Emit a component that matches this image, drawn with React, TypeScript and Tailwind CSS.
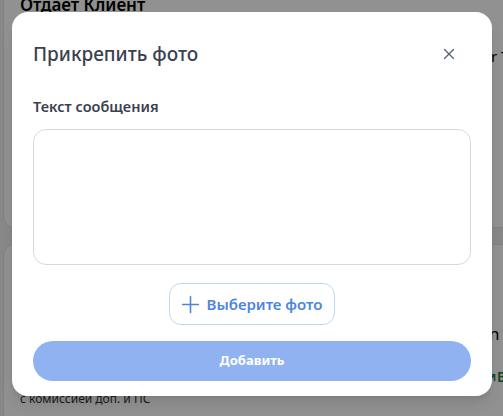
import { X, Plus } from "lucide-react";

export default function App() {
  return (
    <div
      className="relative h-[416px] w-[503px] overflow-hidden bg-[#f0f0f0]"
      style={{ fontFamily: "'Noto Sans', Inter, sans-serif" }}
    >
      {/* page behind the modal */}
      <div className="-mt-[20px] flex w-[540px] flex-col gap-[16px] pl-[3px]">
        <div className="h-[248px] rounded-xl border border-[#e4e4e4] bg-white pl-4 pt-[14px]">
          <div className="text-[17px] font-semibold leading-[20px] text-black">Отдает Клиент</div>
          <div className="mt-[30px] pl-[471px] text-[15px] text-black">r T</div>
        </div>
        <div className="h-[200px] rounded-xl border border-[#e4e4e4] bg-white pl-4">
          <div className="mt-[78px] pl-[469px] text-[17px] leading-[22px] text-black">n</div>
          <div className="mt-[22px] pl-[466px] text-[14px] font-semibold leading-[20px] text-[#1d7a4a]">↗В</div>
          <div className="mt-[4px] text-[12px] leading-[16px] text-[#333]">с комиссией доп. и ПС</div>
        </div>
      </div>

      {/* overlay */}
      <div className="absolute inset-0 bg-black/[0.43]" />

      {/* modal */}
      <div className="absolute left-[12px] top-[12px] flex h-[384px] w-[480px] flex-col rounded-[16px] bg-white px-[21px] shadow-lg">
        <div className="flex items-center justify-between pt-[28px]">
          <h2 className="text-[19px] font-medium leading-[28px] text-[#3a4150]">Прикрепить фото</h2>
          <button className="mr-[13px] text-[#5b6475]">
            <X size={18} strokeWidth={1.8} />
          </button>
        </div>
        <label className="mt-[28px] text-[14.5px] font-semibold leading-[20px] text-[#3a4150]">Текст сообщения</label>
        <textarea className="mt-[13px] h-[136px] w-full resize-none rounded-[13px] border border-[#d4d9e0] outline-none" />
        <div className="mt-[18px] flex justify-center">
          <button className="flex h-[42px] items-center gap-[3px] rounded-[12px] border border-[#c5d8f3] pl-[7px] pr-[12px] text-[15px] font-semibold text-[#4b86dc]">
            <Plus size={27} strokeWidth={1.4} />
            Выберите фото
          </button>
        </div>
        <button className="mt-[16px] h-[40px] w-full rounded-full bg-[#91b2f0] text-[13px] font-bold text-white">
          Добавить
        </button>
      </div>
    </div>
  );
}
